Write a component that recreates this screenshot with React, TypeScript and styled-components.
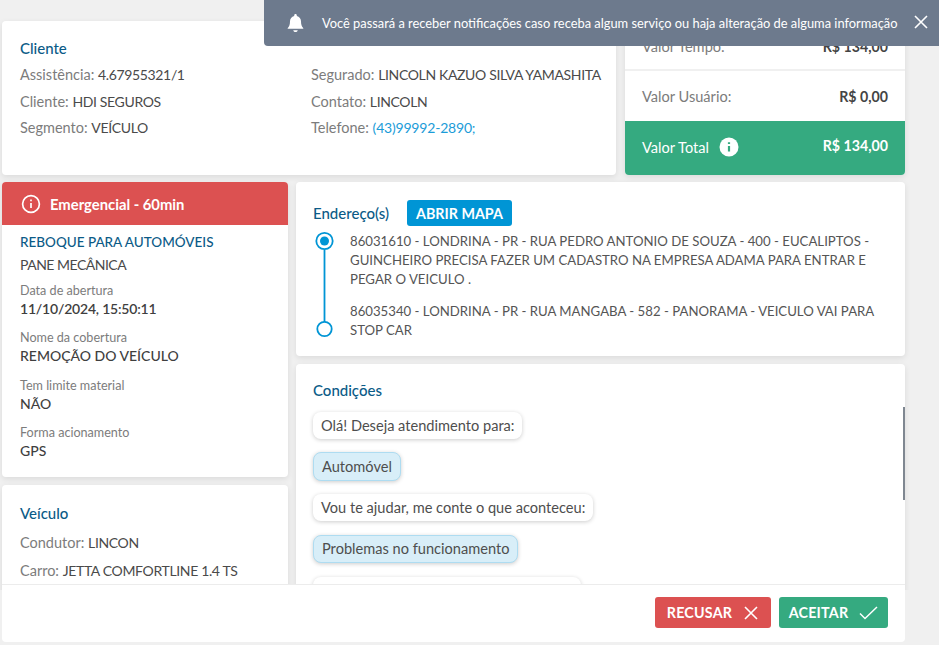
import React from "react";
import styled, { createGlobalStyle } from "styled-components";

const Global = createGlobalStyle`
  html, body { margin: 0; padding: 0; background: #f0f0f0; }
  body { font-family: "Lato", "Noto Sans", sans-serif; font-size: 14.5px; color: #4a4a4a; }
  * { box-sizing: border-box; }
`;

const Page = styled.div`
  position: relative;
  width: 939px;
  height: 645px;
  overflow: hidden;
  background: #f0f0f0;
`;
const Content = styled.div`
  width: 915px;
  height: 590px;
  overflow: hidden;
  padding: 21px 0 0 2px;
  display: flex;
  flex-direction: column;
  gap: 7px;
`;
const TopRow = styled.div`
  flex: none;
  display: flex;
  gap: 9px;
  height: 154px;
`;
const Card = styled.section`
  background: #fff;
  border-radius: 4px;
  box-shadow: 0 2px 6px rgba(0, 0, 0, 0.09);
`;
const ClientCard = styled(Card)`
  width: 614px;
  padding: 17px 18px;
`;
const Title = styled.h3`
  margin: 0;
  font-size: 15px;
  line-height: 20px;
  font-weight: 500;
  color: #0b5b87;
`;
const ClientGrid = styled.div`
  display: grid;
  grid-template-columns: 291px 1fr;
  margin-top: 4px;
`;
const Stack = styled.div`
  display: flex;
  flex-direction: column;
`;
const Line = styled.div`
  font-size: 14.5px;
  line-height: 26.5px;
  color: #7c7c7c;
  white-space: nowrap;
`;
const Val = styled.span`
  font-size: 14px;
  letter-spacing: -0.35px;
  color: #4a4a4a;
`;
const Link = styled.span`
  font-size: 14px;
  letter-spacing: -0.2px;
  color: #1b9cd8;
`;
const ValueCard = styled(Card)`
  width: 280px;
  display: flex;
  flex-direction: column;
  overflow: hidden;
`;
const ValueRow = styled.div<{ $h: number; $line?: boolean }>`
  flex: none;
  height: ${(p) => p.$h}px;
  padding: ${(p) => (p.$line ? "2px" : "0")} 17px 0;
  display: flex;
  align-items: center;
  justify-content: space-between;
  font-size: 14.6px;
  color: #7c7c7c;
  border-bottom: ${(p) => (p.$line ? "2px solid #f0f0f0" : "none")};
`;
const Amount = styled.strong`
  font-size: 14.2px;
  font-weight: 700;
  color: #444;
`;
const TotalRow = styled.div`
  flex: 1;
  background: #35aa80;
  padding: 0 17px 2px;
  display: flex;
  align-items: center;
  justify-content: space-between;
  color: #fff;
  font-size: 14.6px;
`;
const TotalLabel = styled.span`
  display: flex;
  align-items: center;
  gap: 10px;
`;
const TotalAmount = styled.strong`
  font-size: 14.2px;
  font-weight: 700;
  margin-top: -3px;
`;
const Columns = styled.div`
  flex: none;
  display: flex;
  gap: 8px;
`;
const LeftColumn = styled.div`
  width: 286px;
  display: flex;
  flex-direction: column;
  gap: 8px;
`;
const RightColumn = styled.div`
  width: 609px;
  display: flex;
  flex-direction: column;
  gap: 8px;
`;
const ServiceCard = styled(Card)`
  height: 295px;
  overflow: hidden;
`;
const AlertHeader = styled.div`
  height: 43px;
  background: #dc5151;
  color: #fff;
  font-weight: 700;
  font-size: 14.8px;
  display: flex;
  align-items: center;
  padding-left: 19px;
  gap: 9px;
`;
const ServiceBody = styled.div`
  padding: 7px 18px;
`;
const ServiceTitle = styled(Title)`
  font-size: 13.5px;
  line-height: 20px;
`;
const Plain = styled.div`
  font-size: 14px;
  letter-spacing: -0.5px;
  line-height: 20px;
  margin: 3px 0 -4px;
`;
const Field = styled.div`
  margin-top: 10.5px;
`;
const FieldLabel = styled.div`
  font-size: 12.6px;
  line-height: 18px;
  color: #7c7c7c;
`;
const FieldValue = styled.div<{ $tight?: boolean }>`
  margin-top: -1px;
  font-size: 14px;
  line-height: 20px;
  font-weight: ${(p) => (p.$tight ? 600 : 500)};
  letter-spacing: ${(p) => (p.$tight ? "-0.2px" : "0")};
  color: #3f3f3f;
`;
const VehicleCard = styled(Card)`
  padding: 18px 18px 0;
  height: 160px;
`;
const VehicleRows = styled(Stack)`
  margin-top: 6px;
  ${Line} { line-height: 28px; }
`;
const AddressCard = styled(Card)`
  height: 174px;
  padding: 18px 17px 0;
`;
const AddressHead = styled.div`
  display: flex;
  align-items: center;
  gap: 18px;
`;
const MapButton = styled.button`
  width: 105px;
  height: 26px;
  padding: 0;
  border: 0;
  border-radius: 3px;
  background: #0095d5;
  color: #fff;
  font-family: inherit;
  font-size: 14.3px;
  font-weight: 700;
`;
const Timeline = styled.div`
  display: grid;
  grid-template-columns: 37px 1fr;
  margin-top: 5px;
`;
const Rail = styled.svg`
  display: block;
  margin-left: 0;
`;
const Addresses = styled.div`
  display: flex;
  flex-direction: column;
  gap: 13px;
  padding-top: 1px;
  font-size: 13.2px;
  line-height: 19px;
  color: #555;
`;
const ChatCard = styled(Card)`
  position: relative;
  height: 300px;
  padding: 16px 17px 0;
`;
const Bubbles = styled.div`
  margin-top: 12px;
  display: flex;
  flex-direction: column;
  align-items: flex-start;
  gap: 13.7px;
`;
const Bubble = styled.div<{ $mine?: boolean }>`
  padding: 0 8px;
  height: ${(p) => (p.$mine ? 28.5 : 26.5)}px;
  display: flex;
  align-items: center;
  border-radius: 8px;
  font-size: 14.6px;
  color: #4e4e4e;
  white-space: nowrap;
  background: ${(p) => (p.$mine ? "#d8eef8" : "#fff")};
  border: ${(p) => (p.$mine ? "1px solid #aedcf1" : "none")};
  box-shadow: 0 1px 4px rgba(0, 0, 0, 0.2);
`;
const ScrollThumb = styled.div`
  position: absolute;
  right: 0;
  top: 43px;
  width: 2px;
  height: 93px;
  background: #7f8791;
`;
const Footer = styled.footer`
  position: absolute;
  left: 2px;
  top: 584px;
  width: 903px;
  height: 58px;
  background: #fff;
  border-top: 1px solid #ececec;
  border-radius: 0 0 4px 4px;
  display: flex;
  justify-content: flex-end;
  align-items: flex-start;
  gap: 8px;
  padding: 12px 17px 0 0;
`;
const Action = styled.button<{ $color: string; $w: number }>`
  width: ${(p) => p.$w}px;
  height: 31px;
  border: 0;
  border-radius: 3px;
  background: ${(p) => p.$color};
  color: #fff;
  font-family: inherit;
  font-size: 14.3px;
  font-weight: 700;
  letter-spacing: 0.2px;
  display: flex;
  align-items: center;
  justify-content: center;
  gap: 11px;
  padding: 0;
`;
const Banner = styled.div`
  position: absolute;
  top: 0;
  left: 264px;
  right: 0;
  height: 46px;
  background: #6d7a8d;
  color: #fff;
  border-bottom-left-radius: 4px;
  display: flex;
  align-items: center;
  padding-left: 23px;
  font-size: 12.85px;
`;
const BannerText = styled.span`
  margin-left: 18px;
  white-space: nowrap;
`;
const BannerClose = styled.svg`
  position: absolute;
  right: 10px;
  top: 14px;
`;

const InfoOutline = () => (
  <svg width="20" height="20" viewBox="0 0 20 20" fill="none" stroke="#fff" strokeWidth="1.7">
    <circle cx="10" cy="10" r="8.4" />
    <path d="M10 9v5M10 5.6v1.6" />
  </svg>
);
const InfoSolid = () => (
  <svg width="20" height="20" viewBox="0 0 20 20">
    <circle cx="10" cy="10" r="9.5" fill="#fff" />
    <path d="M10 9v5.5M10 5.2v1.8" stroke="#35aa80" strokeWidth="2.2" />
  </svg>
);
const Bell = () => (
  <svg width="17" height="20" viewBox="0 0 17 20" fill="#fff">
    <path d="M8.5 1c.8 0 1.3.6 1.3 1.3v.6c2.6.6 4.2 2.8 4.2 5.4 0 3.6.7 5 2.2 6.6.3.3.2.9-.4.9H1.2c-.6 0-.7-.6-.4-.9C2.300 13.300 3 11.900 3 8.300c0-2.600 1.600-4.800 4.200-5.400v-.6C7.200 1.600 7.700 1 8.500 1z" />
    <path d="M6.300 17.200h4.400c0 1.100-1 1.800-2.200 1.800s-2.200-.7-2.200-1.800z" />
  </svg>
);
const Cross = ({ size = 16 }: { size?: number }) => (
  <svg width={size} height={size} viewBox="0 0 16 16" stroke="#fff" strokeWidth="1.6" fill="none">
    <path d="M2 2l12 12M14 2L2 14" />
  </svg>
);
const Check = () => (
  <svg width="19" height="14" viewBox="0 0 19 14" stroke="#fff" strokeWidth="1.5" fill="none">
    <path d="M1 7.500l5 5L18 1" />
  </svg>
);

export default function App() {
  return (
    <Page>
      <Global />
      <Content>
        <TopRow>
          <ClientCard>
            <Title>Cliente</Title>
            <ClientGrid>
              <Stack>
                <Line>Assistência: <Val>4.67955321/1</Val></Line>
                <Line>Cliente: <Val>HDI SEGUROS</Val></Line>
                <Line>Segmento: <Val>VEÍCULO</Val></Line>
              </Stack>
              <Stack>
                <Line>Segurado: <Val>LINCOLN KAZUO SILVA YAMASHITA</Val></Line>
                <Line>Contato: <Val>LINCOLN</Val></Line>
                <Line>Telefone: <Link>(43)99992-2890;</Link></Line>
              </Stack>
            </ClientGrid>
          </ClientCard>
          <ValueCard>
            <ValueRow $h={50} $line>
              <span>Valor Tempo:</span>
              <Amount>R$ 134,00</Amount>
            </ValueRow>
            <ValueRow $h={50}>
              <span>Valor Usuário:</span>
              <Amount>R$ 0,00</Amount>
            </ValueRow>
            <TotalRow>
              <TotalLabel>Valor Total <InfoSolid /></TotalLabel>
              <TotalAmount>R$ 134,00</TotalAmount>
            </TotalRow>
          </ValueCard>
        </TopRow>
        <Columns>
          <LeftColumn>
            <ServiceCard>
              <AlertHeader><InfoOutline /> Emergencial - 60min</AlertHeader>
              <ServiceBody>
                <ServiceTitle>REBOQUE PARA AUTOMÓVEIS</ServiceTitle>
                <Plain>PANE MECÂNICA</Plain>
                <Field>
                  <FieldLabel>Data de abertura</FieldLabel>
                  <FieldValue $tight>11/10/2024, 15:50:11</FieldValue>
                </Field>
                <Field>
                  <FieldLabel>Nome da cobertura</FieldLabel>
                  <FieldValue>REMOÇÃO DO VEÍCULO</FieldValue>
                </Field>
                <Field>
                  <FieldLabel>Tem limite material</FieldLabel>
                  <FieldValue>NÃO</FieldValue>
                </Field>
                <Field>
                  <FieldLabel>Forma acionamento</FieldLabel>
                  <FieldValue>GPS</FieldValue>
                </Field>
              </ServiceBody>
            </ServiceCard>
            <VehicleCard>
              <Title>Veículo</Title>
              <VehicleRows>
                <Line>Condutor: <Val>LINCON</Val></Line>
                <Line>Carro: <Val>JETTA COMFORTLINE 1.4 TS</Val></Line>
              </VehicleRows>
            </VehicleCard>
          </LeftColumn>
          <RightColumn>
            <AddressCard>
              <AddressHead>
                <Title>Endereço(s)</Title>
                <MapButton>ABRIR MAPA</MapButton>
              </AddressHead>
              <Timeline>
                <Rail width="22" height="108" viewBox="0 0 22 108" fill="none" stroke="#0095d5" strokeWidth="1.8">
                  <circle cx="11.500" cy="10" r="8.200" />
                  <circle cx="11.500" cy="10" r="4.500" fill="#0095d5" stroke="none" />
                  <path d="M11.500 19v72" />
                  <circle cx="11.500" cy="98" r="7.200" />
                </Rail>
                <Addresses>
                  <div>86031610 - LONDRINA - PR - RUA PEDRO ANTONIO DE SOUZA - 400 - EUCALIPTOS - GUINCHEIRO PRECISA FAZER UM CADASTRO NA EMPRESA ADAMA PARA ENTRAR E PEGAR O VEICULO .</div>
                  <div>86035340 - LONDRINA - PR - RUA MANGABA - 582 - PANORAMA - VEICULO VAI PARA STOP CAR</div>
                </Addresses>
              </Timeline>
            </AddressCard>
            <ChatCard>
              <Title>Condições</Title>
              <Bubbles>
                <Bubble>Olá! Deseja atendimento para:</Bubble>
                <Bubble $mine>Automóvel</Bubble>
                <Bubble>Vou te ajudar, me conte o que aconteceu:</Bubble>
                <Bubble $mine>Problemas no funcionamento</Bubble>
                <Bubble>Qual destes problemas está ocorrendo?</Bubble>
              </Bubbles>
              <ScrollThumb />
            </ChatCard>
          </RightColumn>
        </Columns>
      </Content>
      <Footer>
        <Action $color="#dc5151" $w={116}>RECUSAR <Cross /></Action>
        <Action $color="#35aa80" $w={109}>ACEITAR <Check /></Action>
      </Footer>
      <Banner>
        <Bell />
        <BannerText>Você passará a receber notificações caso receba algum serviço ou haja alteração de alguma informação</BannerText>
        <BannerClose width="16" height="16" viewBox="0 0 16 16" stroke="#fff" strokeWidth="1.6" fill="none">
          <path d="M2 2l12 12M14 2L2 14" />
        </BannerClose>
      </Banner>
    </Page>
  );
}
